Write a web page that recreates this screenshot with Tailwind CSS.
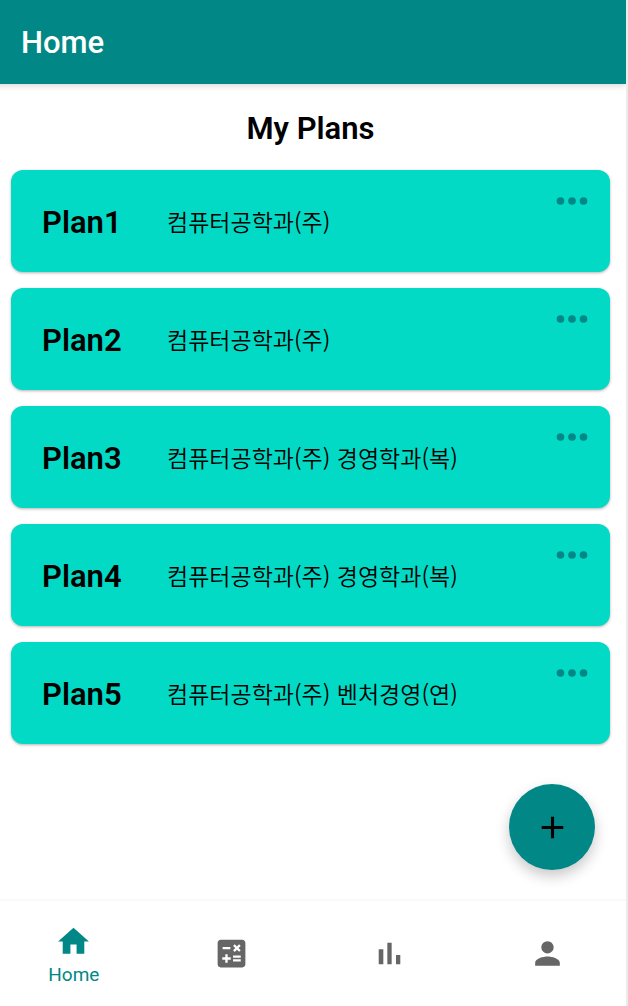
<!DOCTYPE html>
<html lang="ko">
<head>
<meta charset="utf-8">
<meta name="viewport" content="width=device-width, initial-scale=1">
<title>Home</title>
<script src="https://cdn.jsdelivr.net/npm/@tailwindcss/browser@4"></script>
</head>
<body class="min-h-screen overflow-x-hidden border-r-2 border-[#ebebeb] bg-white font-[Roboto,'Noto_Sans_CJK_KR',sans-serif] text-black">
<div class="relative -ml-[5px] flex min-h-screen flex-col">
  <header class="z-10 flex h-[84px] items-center bg-[#018786] pt-px pl-[26px] shadow-[0_2px_6px_rgba(0,0,0,0.15)]">
    <span class="text-[31px] leading-10 font-medium text-white">Home</span>
  </header>

  <main class="flex flex-1 flex-col pr-4 pl-4">
    <h1 class="pt-[26px] pb-[22px] text-center text-[31px] leading-[38px] font-semibold">My Plans</h1>
    <ul class="flex flex-col gap-4">
      <li class="flex h-[102px] items-center rounded-xl bg-[#03dac5] pl-[31px] shadow-[0_1px_3px_rgba(0,0,0,0.3)]">
        <h2 class="w-[125px] pt-1 text-[31px] leading-10 font-semibold">Plan1</h2>
        <p class="flex-1 font-['Noto_Sans_CJK_KR',sans-serif] text-[23px] leading-8 font-[350]">컴퓨터공학과(주)</p>
        <button type="button" aria-label="Plan1 options" class="mt-2 mr-[15px] self-start text-[#018786]"><svg class="size-[46px]" viewBox="0 0 24 24" fill="currentColor"><circle cx="6" cy="12" r="2"/><circle cx="12" cy="12" r="2"/><circle cx="18" cy="12" r="2"/></svg></button>
      </li>
      <li class="flex h-[102px] items-center rounded-xl bg-[#03dac5] pl-[31px] shadow-[0_1px_3px_rgba(0,0,0,0.3)]">
        <h2 class="w-[125px] pt-1 text-[31px] leading-10 font-semibold">Plan2</h2>
        <p class="flex-1 font-['Noto_Sans_CJK_KR',sans-serif] text-[23px] leading-8 font-[350]">컴퓨터공학과(주)</p>
        <button type="button" aria-label="Plan2 options" class="mt-2 mr-[15px] self-start text-[#018786]"><svg class="size-[46px]" viewBox="0 0 24 24" fill="currentColor"><circle cx="6" cy="12" r="2"/><circle cx="12" cy="12" r="2"/><circle cx="18" cy="12" r="2"/></svg></button>
      </li>
      <li class="flex h-[102px] items-center rounded-xl bg-[#03dac5] pl-[31px] shadow-[0_1px_3px_rgba(0,0,0,0.3)]">
        <h2 class="w-[125px] pt-1 text-[31px] leading-10 font-semibold">Plan3</h2>
        <p class="flex-1 font-['Noto_Sans_CJK_KR',sans-serif] text-[23px] leading-8 font-[350]">컴퓨터공학과(주) 경영학과(복)</p>
        <button type="button" aria-label="Plan3 options" class="mt-2 mr-[15px] self-start text-[#018786]"><svg class="size-[46px]" viewBox="0 0 24 24" fill="currentColor"><circle cx="6" cy="12" r="2"/><circle cx="12" cy="12" r="2"/><circle cx="18" cy="12" r="2"/></svg></button>
      </li>
      <li class="flex h-[102px] items-center rounded-xl bg-[#03dac5] pl-[31px] shadow-[0_1px_3px_rgba(0,0,0,0.3)]">
        <h2 class="w-[125px] pt-1 text-[31px] leading-10 font-semibold">Plan4</h2>
        <p class="flex-1 font-['Noto_Sans_CJK_KR',sans-serif] text-[23px] leading-8 font-[350]">컴퓨터공학과(주) 경영학과(복)</p>
        <button type="button" aria-label="Plan4 options" class="mt-2 mr-[15px] self-start text-[#018786]"><svg class="size-[46px]" viewBox="0 0 24 24" fill="currentColor"><circle cx="6" cy="12" r="2"/><circle cx="12" cy="12" r="2"/><circle cx="18" cy="12" r="2"/></svg></button>
      </li>
      <li class="flex h-[102px] items-center rounded-xl bg-[#03dac5] pl-[31px] shadow-[0_1px_3px_rgba(0,0,0,0.3)]">
        <h2 class="w-[125px] pt-1 text-[31px] leading-10 font-semibold">Plan5</h2>
        <p class="flex-1 font-['Noto_Sans_CJK_KR',sans-serif] text-[23px] leading-8 font-[350]">컴퓨터공학과(주) 벤처경영(연)</p>
        <button type="button" aria-label="Plan5 options" class="mt-2 mr-[15px] self-start text-[#018786]"><svg class="size-[46px]" viewBox="0 0 24 24" fill="currentColor"><circle cx="6" cy="12" r="2"/><circle cx="12" cy="12" r="2"/><circle cx="18" cy="12" r="2"/></svg></button>
      </li>
    </ul>
  </main>

  <button type="button" aria-label="Add plan" class="absolute right-[31px] bottom-[136px] flex size-[86px] items-center justify-center rounded-full bg-[#018786] shadow-[0_6px_14px_rgba(0,0,0,0.22)]">
    <svg class="size-[37px]" viewBox="0 0 24 24" fill="currentColor"><path d="M19 13h-6v6h-2v-6H5v-2h6V5h2v6h6v2z"/></svg>
  </button>

  <nav class="grid h-[107px] grid-cols-4 border-t-2 border-[#f9f9f9] text-[#666666]">
    <a href="#home" class="flex flex-col items-center justify-center gap-[3px] pt-0.5 text-[#018786]">
      <svg class="size-[37px]" viewBox="0 0 24 24" fill="currentColor"><path d="M10 20v-6h4v6h5v-8h3L12 3 2 12h3v8z"/></svg>
      <span class="text-[19px] leading-6">Home</span>
    </a>
    <a href="#calculator" aria-label="Calculator" class="flex items-center justify-center">
      <svg class="size-[37px]" viewBox="0 0 24 24" fill="currentColor"><path d="M19 3H5c-1.100 0-2 .9-2 2v14c0 1.100.9 2 2 2h14c1.100 0 2-.9 2-2V5c0-1.100-.9-2-2-2zm-5.970 4.060L14.090 6l1.410 1.410L16.910 6l1.060 1.060-1.410 1.410 1.410 1.410-1.060 1.060-1.410-1.400-1.410 1.410-1.060-1.060 1.410-1.410-1.410-1.420zm-6.780.66h5v1.500h-5v-1.500zM11.500 16h-2v2H8v-2H6v-1.500h2v-2h1.500v2h2V16zm6.500 1.250h-5v-1.500h5v1.500zm0-2.500h-5v-1.500h5v1.500z"/></svg>
    </a>
    <a href="#statistics" aria-label="Statistics" class="flex items-center justify-center">
      <svg class="size-[37px]" viewBox="0 0 24 24" fill="currentColor"><path d="M5 9.200h3V19H5zM10.600 5h2.800v14h-2.800zm5.600 8H19v6h-2.800z"/></svg>
    </a>
    <a href="#profile" aria-label="Profile" class="flex items-center justify-center">
      <svg class="size-[37px]" viewBox="0 0 24 24" fill="currentColor"><path d="M12 12c2.210 0 4-1.790 4-4s-1.790-4-4-4-4 1.790-4 4 1.790 4 4 4zm0 2c-2.670 0-8 1.340-8 4v2h16v-2c0-2.660-5.330-4-8-4z"/></svg>
    </a>
  </nav>
</div>
</body>
</html>
